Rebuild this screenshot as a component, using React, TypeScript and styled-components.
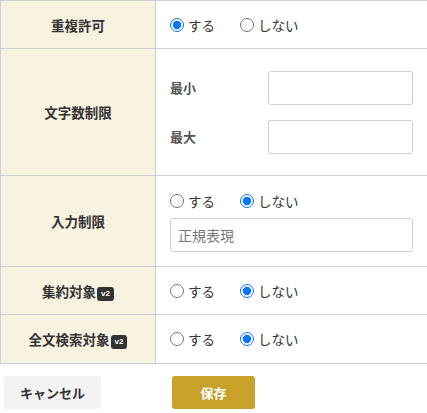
import React, {useState} from 'react'
import styled, {createGlobalStyle} from 'styled-components'

const GlobalStyle = createGlobalStyle`
  body {
    margin: 0;
    background: #fff;
    font-family: "Noto Sans CJK JP", "Noto Sans", sans-serif;
    color: #333;
  }
`

const Page = styled.div`
  width: 427px;
  overflow: hidden;
`

const Table = styled.table`
  width: 428px;
  border-collapse: collapse;
  table-layout: fixed;
`

const Th = styled.th`
  width: 154px;
  background: #f8f2e1;
  border: 1px solid #cfcfcf;
  font-size: 13.5px;
  font-weight: bold;
  color: #333;
  text-align: center;
  vertical-align: middle;
  padding: 0;
`

const Td = styled.td<{$h: number}>`
  height: ${(p) => p.$h}px;
  border: 1px solid #cfcfcf;
  padding: 0 0 0 14px;
  vertical-align: middle;
  box-sizing: border-box;
`

const Badge = styled.span`
  display: inline-block;
  background: #333;
  color: #fff;
  font-size: 8px;
  font-weight: bold;
  line-height: 14px;
  height: 14px;
  padding: 0 4px;
  border-radius: 3px;
  vertical-align: 1px;
  margin-left: 1px;
  font-family: "Liberation Sans", sans-serif;
`

const RadioGroup = styled.div`
  display: flex;
  align-items: center;
  gap: 25px;
  height: 20px;
`

const RadioLabel = styled.label`
  display: flex;
  align-items: center;
  gap: 4px;
  font-size: 13.5px;
  color: #333;
  cursor: pointer;
`

const Radio = styled.input`
  margin: 0;
  width: 14px;
  height: 14px;
  accent-color: #0a76f6;
`

const Stack = styled.div<{$gap: number}>`
  display: flex;
  flex-direction: column;
  gap: ${(p) => p.$gap}px;
  padding-right: 14px;
`

const RangeRow = styled.div`
  display: flex;
  align-items: center;
`

const RangeLabel = styled.span`
  width: 98px;
  flex-shrink: 0;
  font-size: 13px;
  font-weight: bold;
  color: #555;
`

const TextInput = styled.input`
  box-sizing: border-box;
  display: block;
  width: 100%;
  min-width: 0;
  height: 34px;
  border: 1px solid #cfcfcf;
  border-radius: 3px;
  padding: 0 7px;
  font-size: 14px;
  font-family: inherit;
  color: #333;
  &::placeholder {
    color: #777;
  }
`

const Footer = styled.div`
  display: flex;
  align-items: center;
  padding: 12px 0 0 4px;
`

const Button = styled.button<{$primary?: boolean}>`
  height: 33px;
  width: ${(p) => (p.$primary ? 83 : 97)}px;
  margin-right: ${(p) => (p.$primary ? 0 : 71)}px;
  border: none;
  border-radius: 3px;
  background: ${(p) => (p.$primary ? '#c8a02a' : '#f3f3f3')};
  color: ${(p) => (p.$primary ? '#fff' : '#333')};
  font-family: inherit;
  font-size: 13px;
  font-weight: bold;
  cursor: pointer;
`

const YesNo: React.FC<{name: string; initial: boolean}> = ({name, initial}) => {
  const [value, setValue] = useState(initial)
  return (
    <RadioGroup>
      <RadioLabel>
        <Radio type="radio" name={name} checked={value} onChange={() => setValue(true)} />
        する
      </RadioLabel>
      <RadioLabel>
        <Radio type="radio" name={name} checked={!value} onChange={() => setValue(false)} />
        しない
      </RadioLabel>
    </RadioGroup>
  )
}

export default function App() {
  return (
    <Page>
      <GlobalStyle />
      <Table>
        <tbody>
          <tr>
            <Th>重複許可</Th>
            <Td $h={48}>
              <YesNo name="dup" initial={true} />
            </Td>
          </tr>
          <tr>
            <Th>文字数制限</Th>
            <Td $h={127}>
              <Stack $gap={15}>
                <RangeRow>
                  <RangeLabel>最小</RangeLabel>
                  <TextInput />
                </RangeRow>
                <RangeRow>
                  <RangeLabel>最大</RangeLabel>
                  <TextInput />
                </RangeRow>
              </Stack>
            </Td>
          </tr>
          <tr>
            <Th>入力制限</Th>
            <Td $h={91}>
              <Stack $gap={7}>
                <YesNo name="restrict" initial={false} />
                <TextInput placeholder="正規表現" />
              </Stack>
            </Td>
          </tr>
          <tr>
            <Th>
              集約対象<Badge>v2</Badge>
            </Th>
            <Td $h={48}>
              <YesNo name="agg" initial={false} />
            </Td>
          </tr>
          <tr>
            <Th>
              全文検索対象<Badge>v2</Badge>
            </Th>
            <Td $h={49}>
              <YesNo name="fts" initial={false} />
            </Td>
          </tr>
        </tbody>
      </Table>
      <Footer>
        <Button>キャンセル</Button>
        <Button $primary>保存</Button>
      </Footer>
    </Page>
  )
}
